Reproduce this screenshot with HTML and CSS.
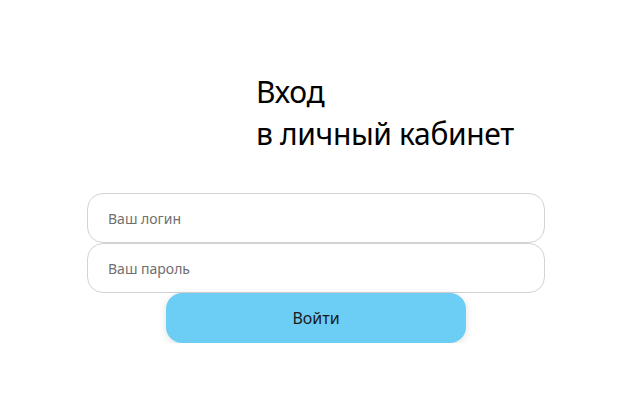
FILE: index.html
```html
<!DOCTYPE html>
<html lang="ru">
<head>
    <meta charset="UTF-8">
    <meta name="viewport" content="width=device-width, initial-scale=1.0">
    <title>Вход в личный кабинет</title>
    <link rel="stylesheet" href="styles.css">
</head>
<body>
    <div class="login">
        <h1 class="login-title">Вход<br>в личный кабинет</h1>

        <form class="login-form">
            <input class="login-input" type="text" placeholder="Ваш логин">
            <input class="login-input" type="password" placeholder="Ваш пароль">
            <button class="login-button" type="button">Войти</button>
        </form>
    </div>
</body>
</html>
```

FILE: styles.css
```css
body {
    margin: 0;
    background-color: white;
    font-family: "Noto Sans", sans-serif;
}

.login {
    width: 458px;
    margin: 0 auto;
    padding: 71px 0 0 2px;
}

.login-title {
    margin: 0 0 38px 169px;
    font-size: 30px;
    font-weight: normal;
    line-height: 42px;
    letter-spacing: -0.35px;
    color: black;
}

.login-form {
    display: flex;
    flex-direction: column;
    align-items: center;
}

.login-input {
    box-sizing: border-box;
    width: 100%;
    height: 50px;
    padding: 0 20px;
    border: 1px solid #d3d3d3;
    border-radius: 16px;
    font-family: "Noto Sans", sans-serif;
    font-size: 14px;
    color: #333;
    outline: none;
}

.login-input::placeholder {
    color: #6f6f6f;
}

.login-button {
    width: 300px;
    height: 50px;
    border: none;
    border-radius: 16px;
    background-color: #6ccdf5;
    box-shadow: 0 2px 8px rgba(0, 0, 0, 0.12);
    font-family: "Noto Sans", sans-serif;
    font-size: 16px;
    color: #1a1a1a;
    cursor: pointer;
}
```
